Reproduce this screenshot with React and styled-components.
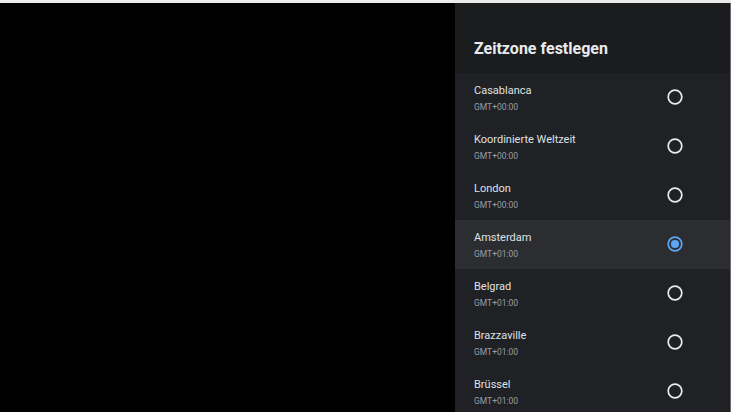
import React from "react";
import styled, { createGlobalStyle } from "styled-components";

const Global = createGlobalStyle`
  html, body { margin: 0; padding: 0; background: #000; }
  body { font-family: Roboto, "Noto Sans", sans-serif; }
`;

const Screen = styled.div`
  width: 731px;
  height: 412px;
  display: flex;
  flex-direction: column;
  overflow: hidden;
  background: #000;
`;

const TopStrip = styled.div`
  height: 3px;
  flex: none;
  background: #ececec;
`;

const Main = styled.div`
  flex: 1;
  display: flex;
  min-height: 0;
`;

const Backdrop = styled.div`
  width: 455px;
  flex: none;
  background: #000;
`;

const Panel = styled.div`
  flex: 1;
  display: flex;
  flex-direction: column;
  background: #202124;
  border-right: 1px solid #6a6b6e;
  min-width: 0;
`;

const Header = styled.div`
  height: 70px;
  flex: none;
  box-sizing: border-box;
  padding: 36px 0 0 19px;
  background: #1b1c1e;
`;

const Title = styled.h1`
  margin: 0;
  font-size: 16px;
  line-height: 19px;
  font-weight: 700;
  color: #e8eaed;
`;

const List = styled.div`
  display: flex;
  flex-direction: column;
`;

const Row = styled.div`
  height: 49px;
  flex: none;
  box-sizing: border-box;
  display: flex;
  align-items: flex-start;
  justify-content: space-between;
  padding: 11px 47px 0 19px;
  background: ${(p) => (p.$selected ? "#2c2d30" : "transparent")};
`;

const Texts = styled.div`
  display: flex;
  flex-direction: column;
`;

const Name = styled.div`
  font-size: 11px;
  line-height: 13px;
  color: #dfe1e4;
  margin-bottom: 4px;
`;

const Offset = styled.div`
  font-size: 8.5px;
  line-height: 10px;
  color: #9a9ea4;
  transform: scaleY(1.1);
  transform-origin: left top;
`;

const RadioBox = styled.div`
  width: 16px;
  height: 16px;
  margin-top: 5px;
  flex: none;
`;

function Radio({ checked }) {
  const color = checked ? "#5aa6f5" : "#e8eaed";
  return (
    <RadioBox>
      <svg width="16" height="16" viewBox="0 0 16 16">
        <circle cx="8" cy="8" r="6.8" fill="none" stroke={color} strokeWidth="1.7" />
        {checked && <circle cx="8" cy="8" r="4.1" fill={color} />}
      </svg>
    </RadioBox>
  );
}

const zones = [
  { name: "Casablanca", off: "GMT+00:00" },
  { name: "Koordinierte Weltzeit", off: "GMT+00:00" },
  { name: "London", off: "GMT+00:00" },
  { name: "Amsterdam", off: "GMT+01:00", selected: true },
  { name: "Belgrad", off: "GMT+01:00" },
  { name: "Brazzaville", off: "GMT+01:00" },
  { name: "Brüssel", off: "GMT+01:00" },
];

export default function App() {
  return (
    <>
      <Global />
      <Screen>
        <TopStrip />
        <Main>
          <Backdrop />
          <Panel>
            <Header>
              <Title>Zeitzone festlegen</Title>
            </Header>
            <List>
              {zones.map((z) => (
                <Row key={z.name} $selected={z.selected}>
                  <Texts>
                    <Name>{z.name}</Name>
                    <Offset>{z.off}</Offset>
                  </Texts>
                  <Radio checked={z.selected} />
                </Row>
              ))}
            </List>
          </Panel>
        </Main>
      </Screen>
    </>
  );
}
